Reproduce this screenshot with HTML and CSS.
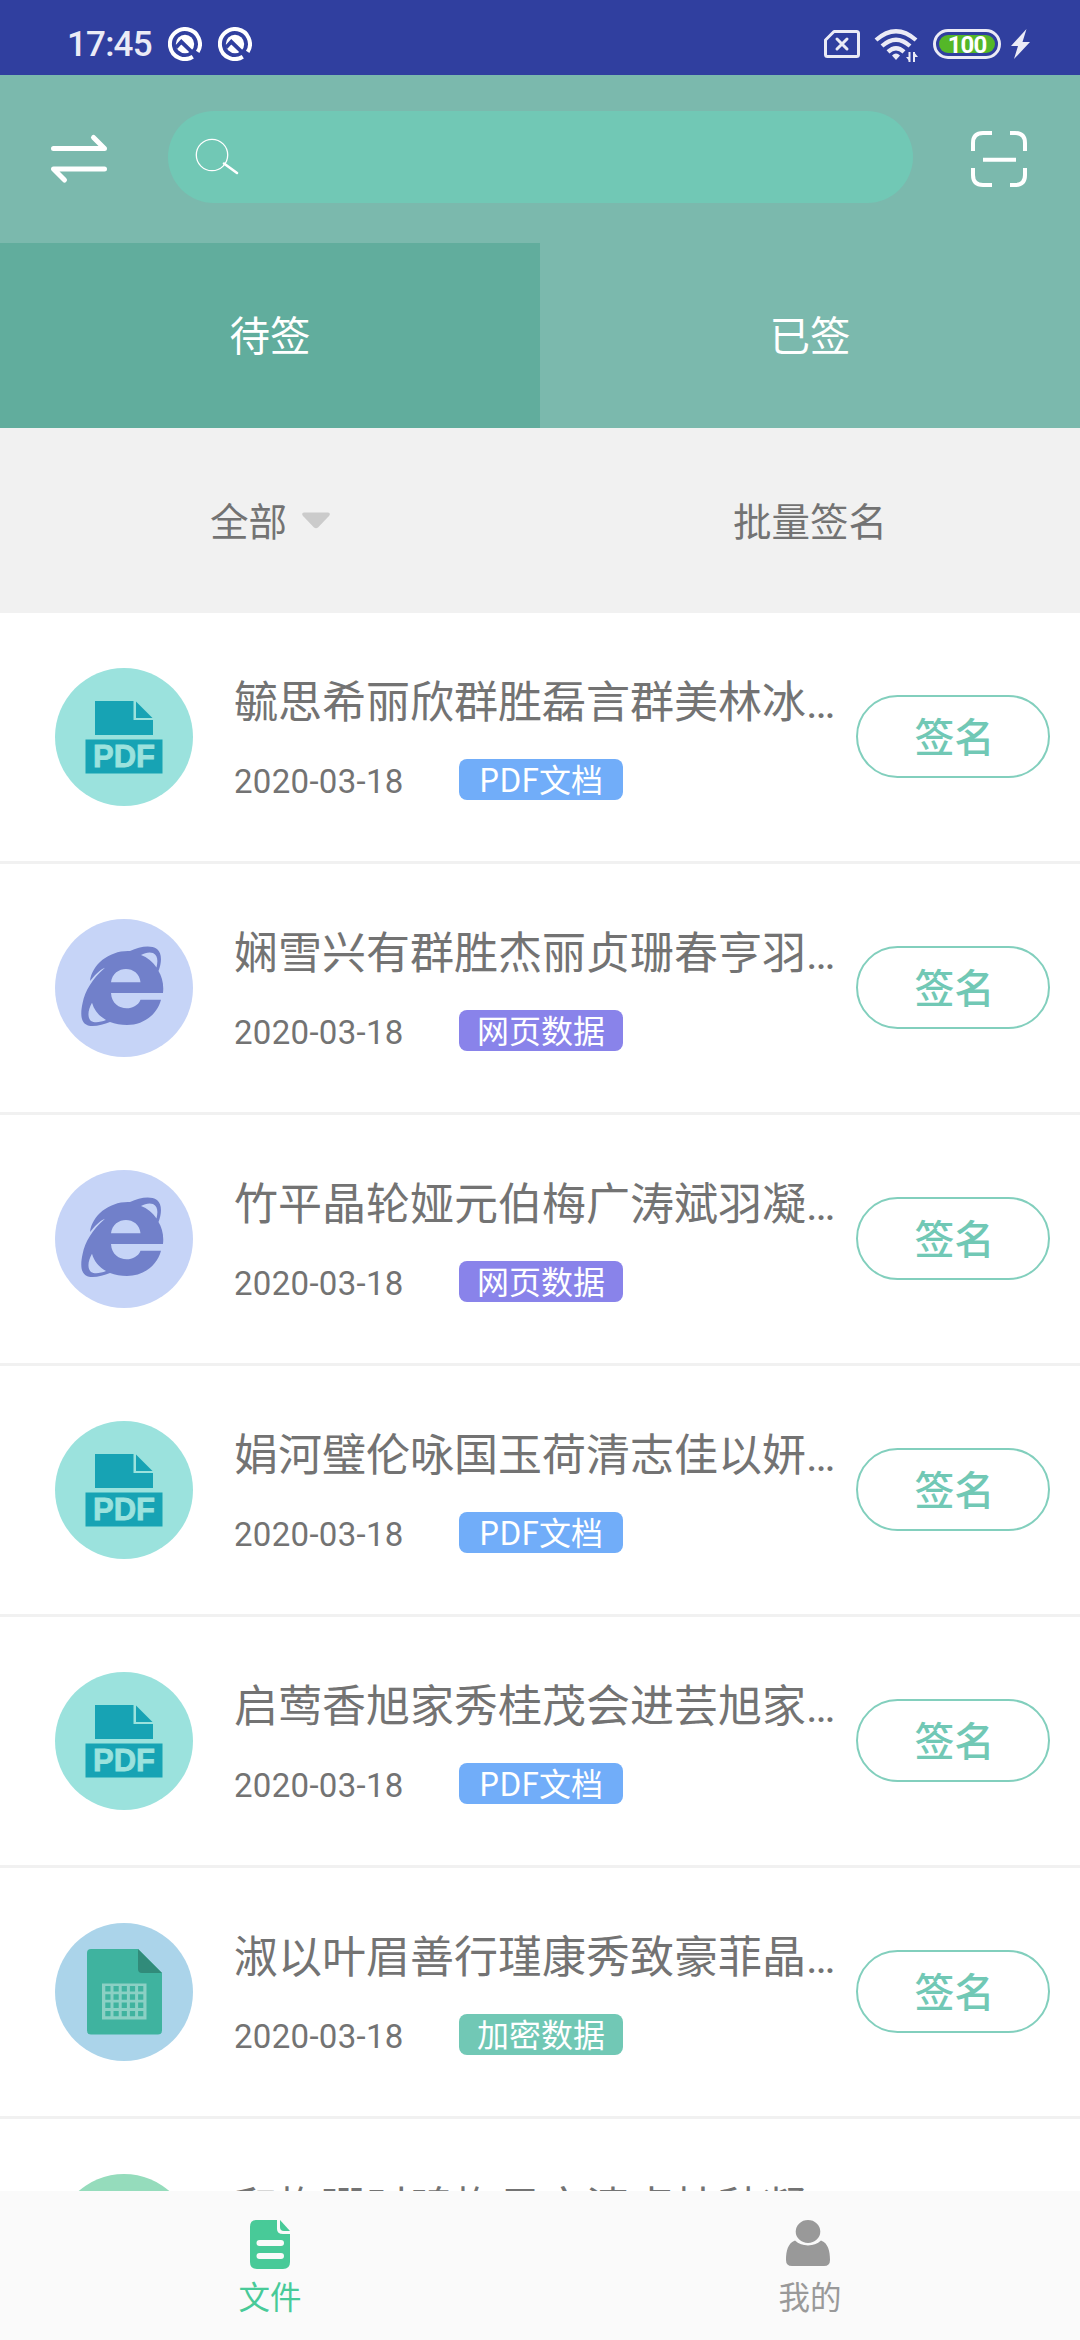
FILE: index.html
```html
<!DOCTYPE html>
<html lang="zh-CN">
<head>
<meta charset="utf-8">
<title>文件</title>
<link rel="stylesheet" href="styles.css">
</head>
<body>
<svg class="defs" width="0" height="0">
  <symbol id="pdf" viewBox="0 0 138 138">
    <circle cx="69" cy="69" r="69" fill="#9be2dd"/>
    <path d="M40 33H78.500V52H98V67H40Z" fill="#17a3b4"/>
    <path d="M81 33.500L97.500 50H81Z" fill="#17a3b4"/>
    <path d="M30.500 71.500H107.500V105.500H30.500Z" fill="#17a3b4"/>
    <text x="69" y="99.300" text-anchor="middle" class="pdf-text">PDF</text>
  </symbol>
  <symbol id="web" viewBox="0 0 138 138">
    <circle cx="69" cy="69" r="69" fill="#c6d4f7"/>
    <path fill="#7180ca" fill-rule="evenodd" d="M35 62C37 45 55 31 75 32C84 28 95 25.500 102 30C107 34 107 43 103.500 52C107 58 109 65 108 74H56C57 93 81 93 85.500 80.700H106C102 96 88 106 72 106C66 106 60 105 55 103C48 106 39 108 33 106.500C26 104 25 96 27.600 84C30 72 37 60 50 48.700C44 51 39 57 35 62ZM56 63.300H85.500C84 45.500 58 45.500 56 63.300ZM86 36C92 38 98 43 101.500 48.500C103 42 103 36.500 98 34C94 32.500 90 34 86 36ZM37 83.700C33 91 32 98 36 102C40 104.500 46 103 51 101C44 97 39 91 37 83.700Z"/>
  </symbol>
  <symbol id="sheet" viewBox="0 0 138 138">
    <circle cx="69" cy="69" r="69" fill="#abd4ea"/>
    <path d="M36 26H83L107 50V107.500Q107 111.500 103 111.500H36Q32 111.500 32 107.500V30Q32 26 36 26Z" fill="#3fb39f"/>
    <path d="M83 26L107 50H87Q83 50 83 46Z" fill="#318b7a"/>
    <path d="M47 60.500H91.500V96.500H47Z" fill="#8bd0c4"/>
    <path d="M52.900 63V94M61.100 63V94M69.300 63V94M77.500 63V94M85.700 63V94" stroke="#3fb39f" stroke-width="5.200" stroke-dasharray="5.400 2.900"/>
  </symbol>
  <symbol id="notice" viewBox="0 0 34 34">
    <path d="M24.800 29.800A15 15 0 1 1 29.700 24.900" fill="none" stroke="#fff" stroke-width="4"/>
    <circle cx="17" cy="17" r="9.200" fill="#fff"/>
    <path d="M8 20.500L13.300 14.800L29 30" fill="none" stroke="#303f9f" stroke-width="3.800"/>
  </symbol>
</svg>
<div class="phone">
  <header class="status">
    <span class="time">17:45</span>
    <svg class="note" width="34" height="34"><use href="#notice"/></svg>
    <svg class="note" width="34" height="34"><use href="#notice"/></svg>
    <svg class="sys" width="210" height="40" viewBox="820 25 210 40">
      <path d="M833 31.500H855.500Q857.500 31.500 857.500 33.500V54.500Q857.500 56.500 855.500 56.500H826.500Q824.500 56.500 824.500 54.500V40Z" fill="none" stroke="#ebebf6" stroke-width="3" stroke-linejoin="round"/>
      <path d="M836 39L846 49M846 39L836 49" stroke="#ebebf6" stroke-width="3" stroke-linecap="round"/>
      <g fill="none" stroke="#ebebf6" stroke-width="4.300">
        <path d="M875 40Q895 22.500 915 40M881 46Q895 33.500 909 46M887 51.800Q895 44.500 903 51.800"/>
      </g>
      <path d="M891 55.500Q895 51.500 899 55.500L895 60Z" fill="#ebebf6"/>
      <path d="M908.500 52V62M913 52V62" stroke="#ebebf6" stroke-width="2"/>
      <path d="M905 57H909V62ZM917 57H913V52Z" fill="#ebebf6"/>
      <rect x="933.500" y="30.500" width="65" height="27" rx="13.500" fill="none" stroke="#ebebf6" stroke-width="3"/>
      <rect x="938" y="35" width="56" height="18" rx="9" fill="#54b728"/>
      <text x="966" y="52.800" text-anchor="middle" class="battery">100</text>
      <path d="M1025.500 29L1010 46H1017L1013 59L1029 42H1021.500Z" fill="#ebebf6"/>
    </svg>
  </header>
  <div class="search-bar">
    <svg width="60" height="60" viewBox="49 129 60 60" fill="none" stroke="#fff" stroke-width="5" stroke-linecap="round" stroke-linejoin="round"><path d="M53.500 148.500H104.500L93.500 137.500M104.500 169H53.500L64.500 180"/></svg>
    <div class="search">
      <svg width="46" height="40" viewBox="193 137 46 40" fill="none" stroke="#fff"><circle cx="211" cy="155" r="15.700" stroke-width="1.300"/><path d="M223 163.500L236 173" stroke-width="2.600" stroke-linecap="round"/></svg>
    </div>
    <svg width="56" height="56" viewBox="0 0 56 56" fill="none" stroke="#fff" stroke-width="4"><path d="M2 20V12Q2 2 12 2H21M39 2H44Q54 2 54 12V20M54 37V44Q54 54 44 54H39M21 54H12Q2 54 2 44V37M12 28.800H45"/></svg>
  </div>
  <nav class="tabs"><div class="tab active">待签</div><div class="tab">已签</div></nav>
  <div class="filters">
    <div class="filter"><span>全部</span><svg width="28" height="17" viewBox="0 0 28 17"><path d="M2 .500H26Q29 1 27 4L16 15.500Q14 17 12 15.500L1 4Q-1 1 2 .500Z" fill="#cbcbcb"/></svg></div>
    <div class="filter"><span>批量签名</span></div>
  </div>
  <main class="list">
    <article class="row"><svg class="avatar"><use href="#pdf"/></svg><div class="info"><h2>毓思希丽欣群胜磊言群美林冰…</h2><div class="meta"><time>2020-03-18</time><span class="tag">PDF文档</span></div></div><button>签名</button></article>
    <article class="row"><svg class="avatar"><use href="#web"/></svg><div class="info"><h2>娴雪兴有群胜杰丽贞珊春亨羽…</h2><div class="meta"><time>2020-03-18</time><span class="tag web">网页数据</span></div></div><button>签名</button></article>
    <article class="row"><svg class="avatar"><use href="#web"/></svg><div class="info"><h2>竹平晶轮娅元伯梅广涛斌羽凝…</h2><div class="meta"><time>2020-03-18</time><span class="tag web">网页数据</span></div></div><button>签名</button></article>
    <article class="row"><svg class="avatar"><use href="#pdf"/></svg><div class="info"><h2>娟河璧伦咏国玉荷清志佳以妍…</h2><div class="meta"><time>2020-03-18</time><span class="tag">PDF文档</span></div></div><button>签名</button></article>
    <article class="row"><svg class="avatar"><use href="#pdf"/></svg><div class="info"><h2>启莺香旭家秀桂茂会进芸旭家…</h2><div class="meta"><time>2020-03-18</time><span class="tag">PDF文档</span></div></div><button>签名</button></article>
    <article class="row"><svg class="avatar"><use href="#sheet"/></svg><div class="info"><h2>淑以叶眉善行瑾康秀致豪菲晶…</h2><div class="meta"><time>2020-03-18</time><span class="tag secure">加密数据</span></div></div><button>签名</button></article>
    <article class="row"><svg class="avatar" viewBox="0 0 138 138"><circle cx="69" cy="69" r="69" fill="#95dcbc"/></svg><div class="info"><h2>和梅珊时鸣梅贝文清卓桂秋凝…</h2></div></article>
  </main>
  <footer class="bottom">
    <div class="item on"><svg width="50" height="49" viewBox="0 0 50 49"><path d="M11 0H32V9Q32 14 38 14H45V42Q45 49 38 49H12Q5 49 5 42V7Q5 0 11 0Z" fill="#48ca98"/><path d="M35 0L45 11H39Q35 11 35 7Z" fill="#48ca98"/><path d="M14.500 23H36M14.500 36H36" stroke="#fafafa" stroke-width="6" stroke-linecap="round"/></svg><span>文件</span></div>
    <div class="item"><svg width="50" height="49" viewBox="0 0 50 49" fill="#999"><path d="M10 20.500C17 27 29 27 36 20.500C43 23 45 31 45 40Q45 46 39 46H7Q1 46 1 40C1 31 3 23 10 20.500Z"/><ellipse cx="23" cy="11.500" rx="13.300" ry="12.500" stroke="#fafafa" stroke-width="2"/></svg><span>我的</span></div>
  </footer>
</div>
</body>
</html>
```
FILE: styles.css
```css
* { box-sizing: border-box; }
body { margin: 0; font-family: Roboto, "Noto Sans CJK SC", sans-serif; color: #737373; }
.defs { position: absolute; }
.phone { width: 1080px; height: 2340px; display: flex; flex-direction: column; overflow: hidden; background: #fff; }
.phone svg { display: block; flex: none; }
.status { height: 75px; flex: none; background: #303f9f; display: flex; align-items: center; padding: 13px 49px 0 67px; }
.time { width: 85px; font-size: 35px; font-weight: 500; line-height: 40px; letter-spacing: -.8px; padding-top: 2px; color: #ebebf6; white-space: nowrap; }
.note { margin-left: 16px; }
.sys { margin-left: auto; margin-top: 2px; }
.battery { font: 700 24px Roboto, sans-serif; letter-spacing: -1px; fill: #fff; }
.search-bar { height: 168px; flex: none; background: #7bb9ad; display: flex; align-items: center; justify-content: space-between; padding: 0 53px 0 49px; }
.search { width: 745px; height: 92px; margin: 0 0 4px; border-radius: 46px; background: #71c8b5; display: flex; align-items: center; padding-left: 26px; }
.tabs { height: 185px; flex: none; display: grid; grid-template-columns: 1fr 1fr; background: #7bb9ad; }
.tab, .filter { display: flex; align-items: center; justify-content: center; }
.tab { color: #fff; font-size: 40.500px; padding-bottom: 5px; }
.tab.active { background: #61ad9d; }
.filters { height: 185px; flex: none; display: grid; grid-template-columns: 1fr 1fr; background: #f1f1f1; font-size: 38.500px; }
.filter { gap: 15px; }
.filter span { padding-bottom: 3px; }
.list { flex: 1; min-height: 0; overflow: hidden; }
.row { height: 251px; border-bottom: 3px solid #f1f1f1; display: flex; align-items: flex-start; padding: 55px 30px 0 55px; }
.avatar { width: 138px; height: 138px; }
.pdf-text { font: bold 31px "Liberation Sans", sans-serif; fill: #9be2dd; stroke: #9be2dd; stroke-width: .8px; }
.info { width: 622px; margin-left: 41px; padding-top: 5px; }
.info h2 { margin: 0; font-size: 44px; font-weight: 400; line-height: 60px; white-space: nowrap; }
.meta { display: flex; align-items: center; margin-top: 26px; height: 41px; }
time { width: 225px; font-size: 33px; letter-spacing: .3px; line-height: 40px; padding-top: 4px; }
.tag { width: 164px; height: 41px; border-radius: 8px; background: #71adf9; color: #fff; font: 32px/38px "Noto Sans CJK SC", sans-serif; text-align: center; }
.tag.web { background: #8983ea; }
.tag.secure { background: #71c8b5; }
button { width: 194px; height: 83px; margin: 27px 0 0; padding: 0 0 3px 3px; border: 2px solid #82cfbd; border-radius: 42px; background: transparent; color: #71c8b5; font: 500 40px/76px "Noto Sans CJK SC", sans-serif; }
.bottom { height: 149px; flex: none; background: #fafafa; display: grid; grid-template-columns: 1fr 1fr; }
.item { display: flex; flex-direction: column; align-items: center; padding-top: 29px; font-size: 31.500px; line-height: 40px; color: #999; }
.item span { margin-top: 10px; }
.item.on { color: #48ca98; }
```
